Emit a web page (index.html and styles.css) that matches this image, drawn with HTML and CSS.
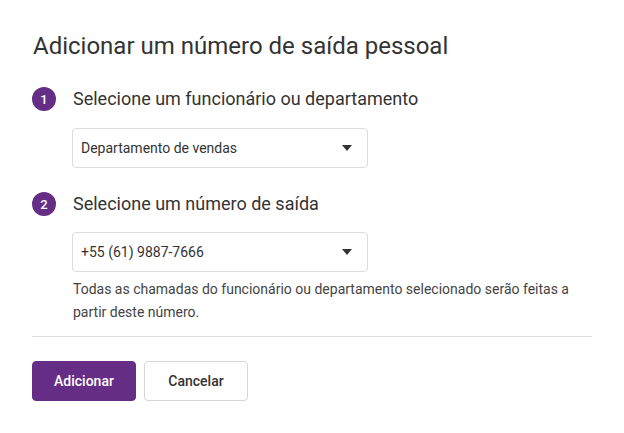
FILE: index.html
```html
<!DOCTYPE html>
<html lang="pt">
<head>
<meta charset="utf-8">
<title>Adicionar um número de saída pessoal</title>
<link rel="stylesheet" href="styles.css">
</head>
<body>
<div class="dialog">
  <h1 class="title">Adicionar um número de saída pessoal</h1>

  <section class="step step-first">
    <div class="step-head">
      <span class="step-num">1</span>
      <h2 class="step-title">Selecione um funcionário ou departamento</h2>
    </div>
    <div class="select">
      <span class="select-value">Departamento de vendas</span>
      <span class="caret"></span>
    </div>
  </section>

  <section class="step step-second">
    <div class="step-head">
      <span class="step-num">2</span>
      <h2 class="step-title">Selecione um número de saída</h2>
    </div>
    <div class="select">
      <span class="select-value">+55 (61) 9887-7666</span>
      <span class="caret"></span>
    </div>
    <p class="helper">Todas as chamadas do funcionário ou departamento selecionado serão feitas a partir deste número.</p>
  </section>

  <hr class="divider">

  <div class="actions">
    <button class="btn btn-primary">Adicionar</button>
    <button class="btn btn-secondary">Cancelar</button>
  </div>
</div>
</body>
</html>
```

FILE: styles.css
```css
html, body {
  margin: 0;
  padding: 0;
  background: #ffffff;
}

body {
  font-family: Roboto, "Liberation Sans", Arial, sans-serif;
  color: #333333;
}

.dialog {
  padding: 32px 32px 0 32px;
}

.title {
  margin: 0;
  font-size: 24px;
  line-height: 28px;
  font-weight: 400;
  color: #333333;
  padding-left: 1px;
}

.step-first {
  margin-top: 27px;
}

.step-second {
  margin-top: 24px;
}

.step-head {
  display: flex;
  align-items: center;
  gap: 17px;
}

.step-num {
  width: 24px;
  height: 24px;
  border-radius: 50%;
  background: #662d87;
  color: #ffffff;
  font-size: 13px;
  font-weight: 500;
  display: flex;
  align-items: center;
  justify-content: center;
  flex: none;
}

.step-title {
  margin: 0;
  font-size: 18px;
  line-height: 24px;
  font-weight: 400;
  color: #333333;
}

.select {
  margin-top: 17px;
  margin-left: 40px;
  width: 296px;
  height: 40px;
  box-sizing: border-box;
  border: 1px solid #dcdcdc;
  border-radius: 4px;
  display: flex;
  align-items: center;
  justify-content: space-between;
  padding: 0 15px 0 8px;
}

.step-second .select {
  margin-top: 16px;
}

.select-value {
  font-size: 14px;
  color: #333333;
}

.caret {
  width: 0;
  height: 0;
  border-left: 5px solid transparent;
  border-right: 5px solid transparent;
  border-top: 6px solid #333333;
}

.helper {
  margin: 6px 0 0 41px;
  font-size: 14px;
  line-height: 23px;
  color: #444444;
  max-width: 500px;
}

.divider {
  margin: 12px 0 0 0;
  border: 0;
  border-top: 1px solid #dddddd;
  height: 0;
}

.actions {
  margin-top: 24px;
  display: flex;
  gap: 8px;
}

.btn {
  height: 40px;
  width: 104px;
  border-radius: 4px;
  font-family: Roboto, "Liberation Sans", Arial, sans-serif;
  font-size: 14px;
  font-weight: 500;
  cursor: pointer;
}

.btn-primary {
  background: #662d87;
  border: 1px solid #662d87;
  color: #ffffff;
}

.btn-secondary {
  background: #ffffff;
  border: 1px solid #d6d6d6;
  color: #333333;
}
```
